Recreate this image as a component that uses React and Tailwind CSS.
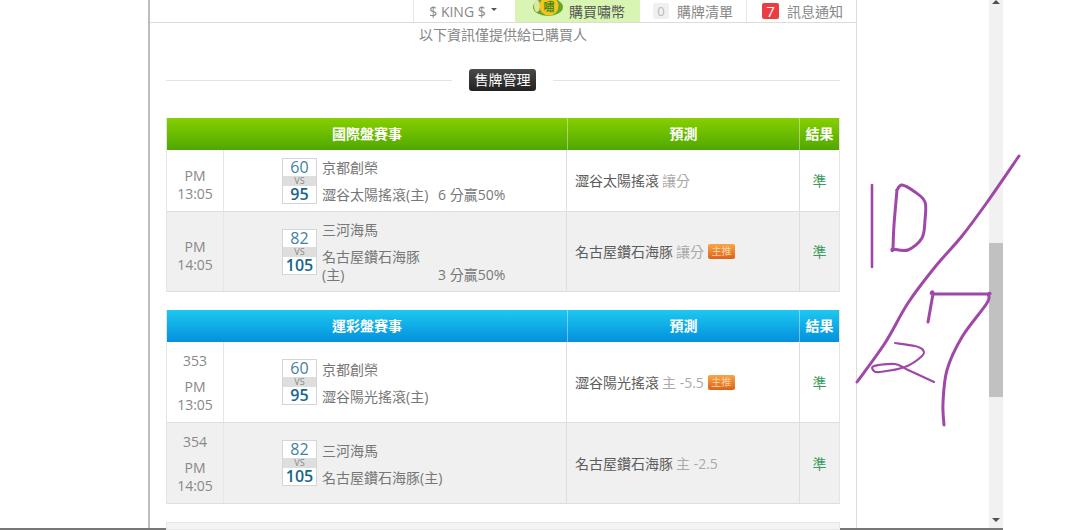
import React from 'react';

const intlRows = [
  { time: ['PM', '13:05'], a: '京都創榮', b: '澀谷太陽搖滾(主)', sa: 60, sb: 95, hcp: '6 分贏50%', pick: '澀谷太陽搖滾', tag: '讓分', h: 'h-[62px]' },
  { time: ['PM', '14:05'], a: '三河海馬', b: '名古屋鑽石海豚(主)', sa: 82, sb: 105, hcp: '3 分贏50%', pick: '名古屋鑽石海豚', tag: '讓分', hot: true, h: 'h-[80px]', alt: true },
];

const lotteryRows = [
  { no: 353, time: ['PM', '13:05'], a: '京都創榮', b: '澀谷陽光搖滾(主)', sa: 60, sb: 95, pick: '澀谷陽光搖滾', tag: '主 -5.5', hot: true, h: 'h-[81px]' },
  { no: 354, time: ['PM', '14:05'], a: '三河海馬', b: '名古屋鑽石海豚(主)', sa: 82, sb: 105, pick: '名古屋鑽石海豚', tag: '主 -2.5', h: 'h-[81px]', alt: true },
];

// handwriting strokes, smoothed through the points (doubled point = sharp corner)
const strokes = [
  { w: 3, pts: [[1019, 156], [988, 201], [962, 236], [935, 267], [908, 303], [885, 343], [857, 382]] },
  { w: 2.6, pts: [[872, 185], [872, 225], [872, 267]] },
  { w: 3, pts: [[897, 190], [897, 190], [902, 185], [915, 192], [925, 202], [925, 220], [922, 238], [908, 250], [893, 249], [893, 249], [894, 225], [897, 190]] },
  { w: 2.2, pts: [[895, 343], [915, 346], [923, 350], [922, 356], [905, 367], [880, 372], [874, 371], [874, 366], [895, 364], [908, 370], [934, 382]] },
  { w: 3, pts: [[928, 322], [933, 294], [933, 294], [960, 294], [988, 294], [988, 294], [987, 303], [962, 337], [947, 370], [943, 403], [944, 425]] },
];

const smoothPath = (pts) => {
  let d = `M${pts[0][0]} ${pts[0][1]}`;
  for (let i = 0; i < pts.length - 1; i++) {
    const p0 = pts[i - 1] || pts[i];
    const p1 = pts[i];
    const p2 = pts[i + 1];
    const p3 = pts[i + 2] || p2;
    d += ` C${p1[0] + (p2[0] - p0[0]) / 6} ${p1[1] + (p2[1] - p0[1]) / 6} ${p2[0] - (p3[0] - p1[0]) / 6} ${p2[1] - (p3[1] - p1[1]) / 6} ${p2[0]} ${p2[1]}`;
  }
  return d;
};

const ScoreBox = ({ a, b }) => (
  <div className="w-[35px] shrink-0 border border-[#d5d5d5] bg-white text-center">
    <div className="h-[17px] text-[16px] leading-[17px] text-[#3f7f9f]">{a}</div>
    <div className="h-[10px] bg-[#dedede] text-[9px] leading-[10px] text-[#888]">VS</div>
    <div className="h-[17px] text-[16px] leading-[17px] font-semibold text-[#17648c]">{b}</div>
  </div>
);

const HotBadge = () => (
  <span className="ml-[4px] inline-block h-[15px] w-[27px] rounded-[2px] bg-gradient-to-b from-[#f9a545] to-[#dc621c] text-center text-[10px] leading-[15px] text-[#f8d0a0]">
    主推
  </span>
);

const Row = ({ row }) => (
  <div className={`flex border-b border-[#dedede] ${row.h} ${row.alt ? 'bg-[#f0f0f0]' : 'bg-white'}`}>
    <div className={`flex w-[57px] shrink-0 flex-col justify-center border-r border-[#e6e6e6] text-center text-[14px] leading-[18px] text-[#888] ${row.no ? 'pt-[2px]' : 'pt-2'}`}>
      {row.no && <div className="mb-2">{row.no}</div>}
      <div>{row.time[0]}</div>
      <div>{row.time[1]}</div>
    </div>
    <div className="flex w-[343px] shrink-0 items-center gap-[5px] border-r border-[#dedede] pl-[58px]">
      <ScoreBox a={row.sa} b={row.sb} />
      <div className="pt-[2px] text-[14px] leading-[18px] text-[#777]">
        <div className="mb-[9px]">{row.a}</div>
        {row.hcp ? (
          <div className="flex items-end">
            <span className="w-[116px]">{row.b}</span>
            <span className="whitespace-nowrap">{row.hcp}</span>
          </div>
        ) : (
          <div>{row.b}</div>
        )}
      </div>
    </div>
    <div className="flex w-[233px] shrink-0 items-center border-r border-[#dedede] pl-2 text-[14px] text-[#5c5c5c]">
      <span>{row.pick}</span>
      <span className="ml-[3px] text-[#aaa]">{row.tag}</span>
      {row.hot && <HotBadge />}
    </div>
    <div className="flex flex-1 items-center justify-center text-[14px] text-[#3c9a5e]">準</div>
  </div>
);

const GameTable = ({ title, rows, headerClass }) => (
  <div className="w-[674px] border-x border-[#e4e4e4]">
    <div className={`flex h-[32px] items-center text-[14px] font-bold text-white ${headerClass}`}>
      <div className="w-[400px] text-center leading-[32px]">{title}</div>
      <div className="w-[233px] border-x border-white/40 text-center leading-[32px]">預測</div>
      <div className="flex-1 text-center leading-[32px]">結果</div>
    </div>
    {rows.map((row) => (
      <Row key={row.a + row.b} row={row} />
    ))}
  </div>
);

const NavBar = () => (
  <div className="flex h-[23px] justify-end border-b border-[#dcdcdc] text-[14px] leading-[21px] text-[#888]">
    <div className="flex w-[102px] items-center justify-center gap-[5px] border-l border-[#e6e6e6] pr-[3px]">
      <span>$ KING $</span>
      <span className="mb-[3px] h-0 w-0 border-x-[3px] border-t-[3px] border-x-transparent border-t-[#555]"></span>
    </div>
    <div className="flex w-[125px] items-center gap-[6px] overflow-hidden bg-[#d8f5b4] pl-[18px] text-[#555]">
      <svg width="30" height="22" viewBox="0 0 30 22" className="mt-[-7px] shrink-0">
        <ellipse cx="15" cy="10" rx="15" ry="9" fill="#6aa52a" />
        <ellipse cx="4" cy="9" rx="3" ry="6" fill="#d8e8a0" />
        <circle cx="16" cy="9" r="9.5" fill="#f3c51d" />
        <text x="16" y="14" textAnchor="middle" fontSize="11" fontWeight="700" fill="#3f8a1c">嘯</text>
      </svg>
      <span>購買嘯幣</span>
    </div>
    <div className="flex w-[107px] items-center gap-[8px] border-r border-[#e6e6e6] pl-[13px]">
      <span className="h-[16px] w-[16px] rounded-[2px] bg-[#f0f0f0] text-center text-[13px] leading-[16px] text-[#bbb]">0</span>
      <span>購牌清單</span>
    </div>
    <div className="flex w-[109px] items-center gap-[8px] pl-[15px]">
      <span className="h-[16px] w-[17px] rounded-[2px] bg-[#ee3b42] text-center text-[15px] leading-[16px] text-white">7</span>
      <span>訊息通知</span>
    </div>
  </div>
);

const Scrollbar = () => (
  <div className="flex w-[14px] shrink-0 flex-col items-center bg-[#f1f1f1]">
    <div className="h-0 w-0 border-x-[4px] border-b-[4px] border-x-transparent border-b-[#505050]"></div>
    <div className="mt-[239px] h-[154px] w-full bg-[#c1c1c1]"></div>
    <div className="mt-[121px] h-0 w-0 border-x-[4px] border-t-[4px] border-x-transparent border-t-[#505050]"></div>
  </div>
);

const Handwriting = () => (
  <svg className="absolute left-0 top-0 pointer-events-none" width="1080" height="530" viewBox="0 0 1080 530" fill="none" stroke="#a048a8" strokeLinejoin="round" strokeLinecap="round">
    {strokes.map((s, i) => (
      <path key={i} d={smoothPath(s.pts)} strokeWidth={s.w} />
    ))}
  </svg>
);

const App = () => {
  return (
    <div className="relative h-[530px] w-[1080px] overflow-hidden bg-white font-['Open_Sans','Noto_Sans_CJK_TC',sans-serif]">
      <div className="flex h-[528px]">
        <div className="w-[148px] shrink-0"></div>
        <div className="w-[709px] shrink-0 border-x border-[#dcdcdc] border-l-[2px] border-l-[#bdbdbd]">
          <NavBar />
          <div className="flex flex-col pl-[16px] pr-[16px]">
            <div className="h-[20px] whitespace-nowrap text-center text-[14px] leading-[24px] text-[#888]">以下資訊僅提供給已購買人</div>
            <div className="mt-[26px] flex h-[22px] items-center">
              <div className="h-px w-[286px] bg-[#e4e4e4]"></div>
              <span className="ml-[17px] h-[22px] w-[67px] shrink-0 whitespace-nowrap rounded-[3px] bg-gradient-to-b from-[#4a4a4a] to-[#222] text-center text-[14px] leading-[22px] text-white">售牌管理</span>
              <div className="ml-[17px] h-px w-[287px] bg-[#e4e4e4]"></div>
            </div>
            <div className="mt-[27px]">
              <GameTable title="國際盤賽事" rows={intlRows} headerClass="bg-gradient-to-b from-[#86cf00] to-[#4fa800]" />
            </div>
            <div className="mt-[18px]">
              <GameTable title="運彩盤賽事" rows={lotteryRows} headerClass="bg-gradient-to-b from-[#1ec8f0] to-[#0590dc]" />
            </div>
            <div className="mt-[18px] h-[8px] w-[674px] border border-[#e8e8e8] bg-[#f4f4f4]"></div>
          </div>
        </div>
        <div className="w-[132px] shrink-0"></div>
        <Scrollbar />
      </div>
      <div className="h-[2px] w-[1003px] bg-[#777]"></div>
      <Handwriting />
    </div>
  );
};

export default App;
